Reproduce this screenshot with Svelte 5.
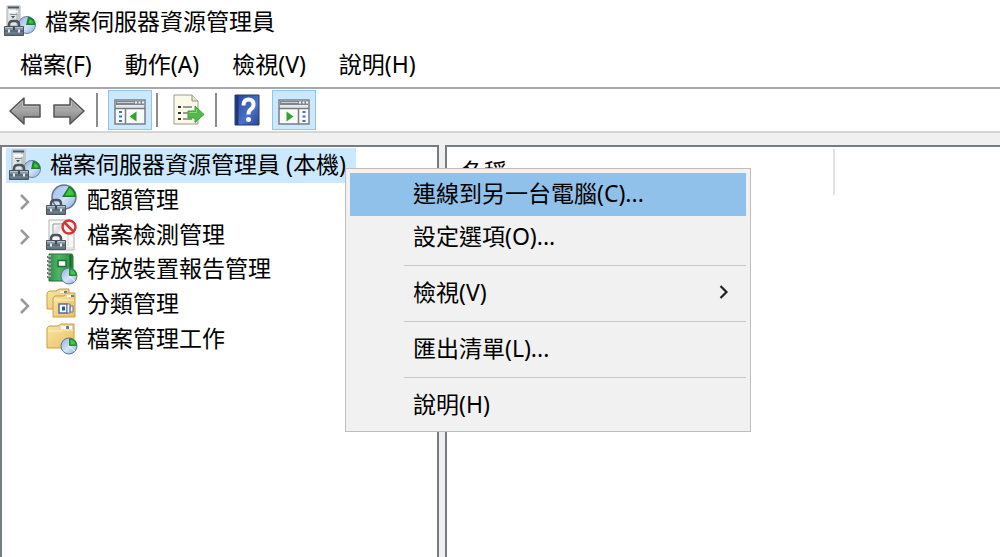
<script>
  const menus = ['檔案(F)', '動作(A)', '檢視(V)', '說明(H)'];

  const nodes = [
    { label: '配額管理', icon: 'quota', expandable: true },
    { label: '檔案檢測管理', icon: 'screening', expandable: true },
    { label: '存放裝置報告管理', icon: 'report', expandable: false },
    { label: '分類管理', icon: 'classify', expandable: true },
    { label: '檔案管理工作', icon: 'tasks', expandable: false }
  ];

  const groups = [
    [{ label: '連線到另一台電腦(C)...' }, { label: '設定選項(O)...' }],
    [{ label: '檢視(V)', submenu: true }],
    [{ label: '匯出清單(L)...' }],
    [{ label: '說明(H)' }]
  ];

  let active = $state('連線到另一台電腦(C)...');
</script>

<svg class="defs" aria-hidden="true">
  <defs>
    <linearGradient id="arrow" x1="0" y1="0" x2="0" y2="1">
      <stop offset="0" stop-color="#8c8c8c" /><stop offset=".45" stop-color="#a9a9a9" /><stop offset="1" stop-color="#777" />
    </linearGradient>
    <linearGradient id="disc" x1="0" y1="0" x2="1" y2="1">
      <stop offset="0" stop-color="#8fb0e0" /><stop offset=".55" stop-color="#d3e4fa" /><stop offset="1" stop-color="#8aaad8" />
    </linearGradient>
    <linearGradient id="steel" x1="0" y1="0" x2="0" y2="1">
      <stop offset="0" stop-color="#93a3af" /><stop offset="1" stop-color="#5a6c79" />
    </linearGradient>
    <linearGradient id="folder" x1="0" y1="0" x2="1" y2="1">
      <stop offset="0" stop-color="#fbe6a6" /><stop offset="1" stop-color="#e5bf62" />
    </linearGradient>
    <linearGradient id="book" x1="0" y1="0" x2="1" y2="0">
      <stop offset="0" stop-color="#2f9048" /><stop offset=".4" stop-color="#4fb565" /><stop offset="1" stop-color="#278c3e" />
    </linearGradient>
    <linearGradient id="help" x1="0" y1="0" x2="1" y2="1">
      <stop offset="0" stop-color="#24449a" /><stop offset=".6" stop-color="#4a72c8" /><stop offset="1" stop-color="#2a4796" />
    </linearGradient>
  </defs>
</svg>

{#snippet toolbox()}
  <path d="M5 22v-2q0-4 4-4h2q4 0 4 4v2" fill="none" stroke="#4c5359" stroke-width="2.500" />
  <path d="M.5 21.500h19v9H.5z" fill="url(#steel)" stroke="#475560" />
  <path d="M1 22.500h18" stroke="#b5c3cd" />
  <path d="M1 26h18" stroke="#40515e" />
  <path d="M4 24.500h2v3H4zM14 24.500h2v3h-2z" fill="#e3eaef" />
  <path d="M9 22h2v3H9z" fill="#38464f" />
{/snippet}

{#snippet smallDisc()}
  <circle cx="23" cy="23" r="8" fill="url(#disc)" stroke="#5f7698" />
  <path d="M23 23v-8a8 8 0 0 1 8 8z" fill="#1d922b" />
  <path d="M24.500 21.500v-5q4 1 5 5z" fill="#4dc547" />
  <path d="M23 23l6 5" stroke="#f3f8ff" stroke-width="1" />
{/snippet}

{#snippet serverIcon()}
  <svg class="icon" viewBox="0 0 32 32" aria-hidden="true">
    <path d="M3 1h13v20H3z" fill="#e0e4e6" stroke="#a6adb1" />
    <path d="M12 1h4v20h-4z" fill="#bfc7cb" />
    <path d="M4 2.500h11" stroke="#4c5960" stroke-width="2" />
    <path d="M5 6.500h9" stroke="#fff" stroke-width="2" />
    <path d="M6 9.500h7" stroke="#87939a" />
    <path d="M7 11h4l-2 2.500z" fill="#46535b" />
    <circle cx="23" cy="20" r="8.500" fill="url(#disc)" stroke="#6a80a2" />
    <path d="M22 20l2-8.500a8.500 8.500 0 0 1 7.500 8.500z" fill="#16842a" />
    <path d="M24.500 18.500l1-4.500q3.500 1 4 4.500z" fill="#45bf40" />
    {@render toolbox()}
  </svg>
{/snippet}

{#snippet nodeIcon(name)}
  <svg class="icon" viewBox="0 0 32 32" aria-hidden="true">
    {#if name === 'quota'}
      <circle cx="18" cy="13" r="12" fill="url(#disc)" stroke="#5f7698" stroke-width="1.500" />
      <path d="M9 9q3-6 8-6v9l-7 4z" fill="#b5cdf0" />
      <path d="M16 13L23 2a12 12 0 0 1 7 11z" fill="#168326" />
      <path d="M19 11.500l4.500-7.500q4 3 4.500 7.500z" fill="#48c040" />
      {@render toolbox()}
    {:else if name === 'screening'}
      <path d="M3 1h21l4 4v26H3z" fill="#f8f8f8" stroke="#b1b1b1" />
      <path d="M7 17V5h10" fill="none" stroke="#8f989d" />
      <path d="M8 14q0-7 7-9v5l-4 6z" fill="#e0e4e8" />
      <path d="M22 16v11M20 29h7" stroke="#d4d4d4" />
      <circle cx="23" cy="8" r="6.500" fill="#fff4f2" stroke="#c93a3a" stroke-width="2.500" />
      <path d="M18.500 3.500l9 9" stroke="#c93a3a" stroke-width="2.500" />
      {@render toolbox()}
    {:else if name === 'report'}
      <path d="M3 1h23l1 2v25H3z" fill="url(#book)" stroke="#277239" />
      <path d="M24.500 2v24" stroke="#176a2c" stroke-width="2" />
      <path d="M1 4h5M1 8h5M1 12h5M1 16h5M1 20h5M1 24h5" stroke="#68766d" stroke-width="2" />
      <path d="M2 3h3M2 7h3M2 11h3M2 15h3M2 19h3M2 23h3" stroke="#e3e9e4" />
      <path d="M12 7.500h8v6h-8z" fill="#fff" stroke="#1c7130" stroke-width="1.500" />
      {@render smallDisc()}
    {:else if name === 'classify'}
      <path d="M1 5l2-2h7l3-2h10v20H1z" fill="url(#folder)" stroke="#c99e47" />
      <path d="M14 3h7v2h-7z" fill="#fff" />
      <path d="M18 3h3v2h-3z" fill="#4b84b9" />
      <path d="M7 10l2-2h9l2-3h9v24H7z" fill="url(#folder)" stroke="#c99e47" />
      <path d="M21 7h7v2h-7z" fill="#fff" /><path d="M25 7h3v2h-3z" fill="#4b84b9" />
      <path d="M8 12h20" stroke="#fff0c2" />
      <path d="M13 16h8v9h-8z" fill="#fff" stroke="#596b92" stroke-width="1.500" />
      <path d="M21 16h3v9h-3zM24 18h3v6h-3z" fill="#eef2ff" stroke="#6c7591" />
      <path d="M16 18.500h3v4h-3z" fill="#2458a8" />
    {:else}
      <path d="M1 5l2-2h9l3-2h13v24H1z" fill="url(#folder)" stroke="#c99e47" />
      <path d="M15 3h11v3H15z" fill="#fff" />
      <path d="M20 3h3v3h-3z" fill="#4b84b9" />
      <path d="M2 8h12l2-1h11" fill="none" stroke="#fff2c5" />
      {@render smallDisc()}
    {/if}
  </svg>
{/snippet}

{#snippet paneIcon(right)}
  <svg class="icon" viewBox="0 0 32 32" aria-hidden="true">
    <path d="M1 4h30v24H1z" fill="#fafafa" stroke="#777e84" stroke-width="1.500" />
    <path d="M2 5h28v4H2z" fill="#7d868d" />
    <path d="M3 6.500h17" stroke="#c9d0d5" />
    <path d="M21 5.500h2v2h-2zM24.500 5.500h2v2h-2zM28 5.500h2v2h-2z" fill="#f5f8fb" />
    <path d="M2 10.500h28" stroke="#dfe3e6" stroke-width="2" />
    <path d="M1 12.500h30" stroke="#747b80" stroke-width="1.500" />
    {#if right}
      <path d="M20.500 13v15" stroke="#777e84" stroke-width="1.500" />
      <path d="M24.500 16h3M24.500 20.500h3M24.500 25h3" stroke="#3f76b8" stroke-width="2" />
      <path d="M8.500 15.500l7 5-7 5z" fill="#31a42e" />
    {:else}
      <path d="M11.500 13v15" stroke="#777e84" stroke-width="1.500" />
      <path d="M5 16h3M5 20.500h3M5 25h3" stroke="#3f76b8" stroke-width="2" />
      <path d="M22.500 15.500l-7 5 7 5z" fill="#31a42e" />
    {/if}
  </svg>
{/snippet}

<div class="window">
  <header>
    {@render serverIcon()}
    <h1>檔案伺服器資源管理員</h1>
  </header>

  <nav class="menubar">
    {#each menus as item}
      <button>{item}</button>
    {/each}
  </nav>

  <div class="toolbar" role="toolbar" aria-label="工具列">
    <div class="group arrows">
      <button aria-label="上一頁">
        <svg class="icon" viewBox="0 0 32 32" aria-hidden="true">
          <path d="M1 17L15 4v7h16v12H15v7z" fill="url(#arrow)" stroke="#555" stroke-width="1.500" stroke-linejoin="round" />
          <path d="M4 16L13.500 7v5.500h16" fill="none" stroke="#bdbdbd" />
        </svg>
      </button>
      <button aria-label="下一頁">
        <svg class="icon" viewBox="0 0 32 32" aria-hidden="true">
          <path d="M31 17L17 4v7H1v12h16v7z" fill="url(#arrow)" stroke="#555" stroke-width="1.500" stroke-linejoin="round" />
          <path d="M28 16L18.500 7v5.500h-16" fill="none" stroke="#bdbdbd" />
        </svg>
      </button>
    </div>
    <div class="group toggle">
      <button class="pressed" aria-label="主控台樹狀目錄" aria-pressed="true">{@render paneIcon(false)}</button>
    </div>
    <div class="group export">
      <button aria-label="匯出清單">
        <svg class="icon" viewBox="0 0 32 32" aria-hidden="true">
          <path d="M1 1h18l6 6v23H1z" fill="#fbf9e8" stroke="#9b9b8d" />
          <path d="M19 1v6h6" fill="#e8e6d6" stroke="#8f8f83" />
          <path d="M5 13h3M5 19h3M5 25h3" stroke="#333" stroke-width="2" />
          <path d="M10 13h9M10 19h6M10 25h9" stroke="#74798a" stroke-width="1.500" />
          <path d="M15 17h7v-5l9 8.500-9 8V24h-7z" fill="#52b947" stroke="#43a03a" />
          <path d="M16 18.500h7.500v-3" fill="none" stroke="#8bd97e" />
        </svg>
      </button>
    </div>
    <div class="group last">
      <button aria-label="說明">
        <svg class="icon" viewBox="0 0 32 32" aria-hidden="true">
          <path d="M4 1h24v30H4z" fill="url(#help)" stroke="#26396e" />
          <path d="M6 1v30" stroke="#1f3776" stroke-width="3" />
          <path d="M12.500 11.500q0-6 5-6t5 5q0 3-3 5-2 1.500-2 5" fill="none" stroke="#fff" stroke-width="4" />
          <circle cx="17.500" cy="25.500" r="2.500" fill="#fff" />
        </svg>
      </button>
      <button class="pressed" aria-label="動作窗格" aria-pressed="true">{@render paneIcon(true)}</button>
    </div>
  </div>

  <main>
    <section class="pane tree" aria-label="主控台樹狀目錄">
      <ul>
        <li><button class="root">{@render serverIcon()}<span class="label">檔案伺服器資源管理員 (本機)</span></button></li>
        {#each nodes as node}
          <li>
            <button class="node">
              <span class="twisty">
                {#if node.expandable}
                  <svg viewBox="0 0 12 18" aria-hidden="true"><path d="M2 2l7 7-7 7" fill="none" stroke="#999" stroke-width="2.500" /></svg>
                {/if}
              </span>
              {@render nodeIcon(node.icon)}
              <span class="label">{node.label}</span>
            </button>
          </li>
        {/each}
      </ul>
    </section>
    <section class="pane list" aria-label="清單">
      <table>
        <thead><tr><th scope="col">名稱</th></tr></thead>
      </table>
    </section>
  </main>

  <div class="context" role="menu">
    {#each groups as group, i}
      {#if i > 0}<hr />{/if}
      {#each group as item}
        <button role="menuitem" class:active={active === item.label} onmouseenter={() => (active = item.label)}>
          <span>{item.label}</span>
          {#if item.submenu}
            <svg viewBox="0 0 10 16" aria-hidden="true"><path d="M1.500 2l6 6-6 6" fill="none" stroke="#222" stroke-width="2.200" /></svg>
          {/if}
        </button>
      {/each}
    {/each}
  </div>
</div>

<style>
  :global(body) {
    background: #fff;
  }
  .defs {
    position: absolute;
    width: 0;
    height: 0;
  }
  .window {
    position: relative;
    display: flex;
    flex-direction: column;
    box-sizing: border-box;
    min-height: 100vh;
    overflow: hidden;
    color: #000;
    font: 23px/32px 'Noto Sans', 'Noto Sans CJK TC', sans-serif;
  }
  button {
    margin: 0;
    padding: 0;
    border: 0;
    background: none;
    color: inherit;
    font: inherit;
    text-align: left;
    white-space: nowrap;
  }
  .icon {
    display: block;
    flex: none;
    width: 32px;
    height: 32px;
  }
  header {
    display: flex;
    align-items: center;
    gap: 9px;
    padding: 5px 4px;
  }
  h1 {
    margin: 0;
    font: inherit;
  }
  .menubar {
    display: flex;
    gap: 33px;
    padding: 6px 20px 7px;
    border-bottom: 2px solid #a8a7ab;
  }
  .toolbar {
    display: flex;
    align-items: center;
    height: 42px;
    border-bottom: 2px solid #d4d5d4;
  }
  .group {
    display: flex;
    align-items: center;
  }
  .group + .group::before {
    content: '';
    width: 2px;
    height: 34px;
    background: #8c8c8c;
  }
  .arrows {
    gap: 12px;
    padding: 0 11px 0 9px;
  }
  .toggle {
    gap: 10px;
    padding-right: 4px;
  }
  .export {
    gap: 15px;
    padding-right: 10px;
  }
  .last {
    gap: 14px;
  }
  .last button + button {
    margin-left: -5px;
  }
  .pressed {
    box-sizing: border-box;
    padding: 5px 5px 1px;
    border: 1px solid #8fc6ee;
    background: #cce8ff;
  }
  main {
    display: flex;
    flex: 1;
    gap: 6px;
    padding-top: 12px;
    background: #f0f0f0;
  }
  .pane {
    box-sizing: border-box;
    border: 2px solid #777b84;
    border-bottom: 0;
    background: #fff;
  }
  .tree {
    flex: 0 0 439px;
    padding: 1px 4px;
  }
  .list {
    flex: 1;
    border-right: 0;
    padding-top: 2px;
  }
  ul {
    display: grid;
    grid-auto-rows: 1fr;
    min-height: 208px;
    margin: 0;
    padding: 0;
    list-style: none;
  }
  li {
    display: flex;
  }
  .root,
  .node {
    display: flex;
    align-items: center;
    gap: 9px;
  }
  .root {
    padding: 0 10px 0 3px;
    background: #cce8ff;
  }
  .label {
    padding-bottom: 2px;
  }
  .twisty {
    display: flex;
    width: 18px;
    padding: 4px 0 0 13px;
  }
  .twisty svg {
    width: 12px;
    height: 18px;
  }
  table {
    border-collapse: collapse;
  }
  th {
    box-sizing: border-box;
    width: 387px;
    height: 46px;
    padding: 0 14px 2px;
    border-right: 2px solid #e2e2e2;
    font-weight: 400;
    text-align: left;
  }
  .context {
    position: absolute;
    top: 168px;
    left: 345px;
    display: flex;
    flex-direction: column;
    box-sizing: border-box;
    width: 406px;
    padding: 4px;
    border: 1px solid #bdbdbd;
    background: #f1f1f1;
  }
  .context button {
    display: flex;
    align-items: center;
    justify-content: space-between;
    height: 43px;
    padding: 0 17px 4px 63px;
  }
  .context .active {
    background: #90c1ea;
  }
  .context svg {
    width: 10px;
    height: 16px;
  }
  hr {
    box-sizing: border-box;
    align-self: stretch;
    height: 1px;
    margin: 6px 0 6px 54px;
    border: 0;
    background: #c8c8c8;
  }
</style>
